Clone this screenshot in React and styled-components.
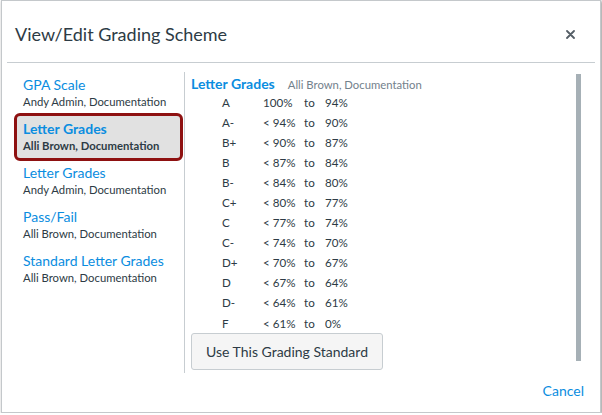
import styled, { createGlobalStyle } from "styled-components";

const GlobalStyle = createGlobalStyle`
  html, body {
    margin: 0;
    padding: 0;
    background: #ffffff;
  }
  body {
    font-family: Lato, "Noto Sans", sans-serif;
    color: #2d3b45;
  }
`;

const Dialog = styled.div`
  box-sizing: border-box;
  width: 600px;
  height: 413px;
  margin-left: 1px;
  background: #fff;
  border: 1px solid #c4c8cb;
  box-shadow: 1px 1px 3px rgba(0, 0, 0, 0.45);
  display: flex;
  flex-direction: column;
`;

const Header = styled.div`
  height: 61px;
  margin: 0 5px;
  padding: 0 20px 0 8px;
  display: flex;
  align-items: center;
  justify-content: space-between;
  border-bottom: 1px solid #c7cdd1;
`;

const Title = styled.h2`
  margin: 0;
  font-size: 18px;
  font-weight: 400;
  color: #2d3b45;
  padding-top: 4px;
`;

const CloseButton = styled.button`
  border: 0;
  background: none;
  padding: 0;
  display: flex;
  margin-top: 5px;
`;

const Body = styled.div`
  display: flex;
  padding: 9px 0 0 6px;
  height: 301px;
`;

const SchemeList = styled.div`
  width: 165px;
  padding: 0 3px 0 8px;
  border-right: 1px solid #c7cdd1;
  display: flex;
  flex-direction: column;
`;

const SchemeItem = styled.div`
  height: 44px;
  box-sizing: border-box;
  padding: 4px 7px 6px;
  border-radius: 6px;

  ${({ $selected }) =>
    $selected &&
    `
    height: 48px;
    margin: -3px -2px -1px;
    padding: 4px 6px 4px;
    border: 3px solid #8e1111;
    background: #e1e1e1;
  `}
`;

const SchemeName = styled.div`
  font-size: 14px;
  line-height: 18px;
  color: #0a8de0;
  font-weight: ${({ $selected }) => ($selected ? 700 : 400)};
`;

const SchemeAuthor = styled.div`
  font-size: 11.3px;
  line-height: 16px;
  color: #2d3b45;
  font-weight: ${({ $selected }) => ($selected ? 700 : 400)};
`;

const Detail = styled.div`
  flex: 1;
  display: flex;
  padding-right: 19px;
`;

const DetailContent = styled.div`
  flex: 1;
  padding: 3px 0 0 6px;
`;

const DetailHeader = styled.div`
  display: flex;
  align-items: baseline;
  gap: 13px;
  line-height: 18px;
`;

const DetailName = styled.span`
  font-size: 14px;
  font-weight: 700;
  color: #0a8de0;
`;

const DetailAuthor = styled.span`
  font-size: 11.3px;
  color: #73818c;
`;

const GradeTable = styled.div`
  padding-left: 31px;
  margin-top: -2px;
`;

const GradeRow = styled.div`
  display: grid;
  grid-template-columns: 41px 41px 21px auto;
  height: 20.1px;
  align-items: center;
  font-size: 11.6px;
  color: #2d3b45;
`;

const UseButton = styled.button`
  margin-top: 0;
  width: 192px;
  height: 37px;
  background: #f5f5f5;
  border: 1px solid #c7cdd1;
  border-radius: 3px;
  font-family: Lato, "Noto Sans", sans-serif;
  font-size: 14px;
  color: #2d3b45;
  padding: 0;
`;

const ScrollThumb = styled.div`
  width: 5px;
  height: 287px;
  margin-top: 2px;
  background: #a6b0b6;
`;

const Footer = styled.div`
  flex: 1;
  display: flex;
  align-items: center;
  justify-content: flex-end;
  padding: 0 16px 5px 0;
`;

const CancelLink = styled.a`
  font-size: 14px;
  color: #0a8de0;
  cursor: pointer;
`;

const schemes = [
  { name: "GPA Scale", author: "Andy Admin, Documentation" },
  { name: "Letter Grades", author: "Alli Brown, Documentation", selected: true },
  { name: "Letter Grades", author: "Andy Admin, Documentation" },
  { name: "Pass/Fail", author: "Alli Brown, Documentation" },
  { name: "Standard Letter Grades", author: "Alli Brown, Documentation" },
];

const grades = [
  ["A", "100%", "94%"],
  ["A-", "< 94%", "90%"],
  ["B+", "< 90%", "87%"],
  ["B", "< 87%", "84%"],
  ["B-", "< 84%", "80%"],
  ["C+", "< 80%", "77%"],
  ["C", "< 77%", "74%"],
  ["C-", "< 74%", "70%"],
  ["D+", "< 70%", "67%"],
  ["D", "< 67%", "64%"],
  ["D-", "< 64%", "61%"],
  ["F", "< 61%", "0%"],
];

function App() {
  return (
    <>
      <GlobalStyle />
      <Dialog>
        <Header>
          <Title>View/Edit Grading Scheme</Title>
          <CloseButton aria-label="Close">
            <svg width="9" height="9" viewBox="0 0 9 9">
              <path d="M1 1 L8 8 M8 1 L1 8" stroke="#555e66" strokeWidth="1.8" strokeLinecap="round" />
            </svg>
          </CloseButton>
        </Header>

        <Body>
          <SchemeList>
            {schemes.map((s, i) => (
              <SchemeItem key={i} $selected={s.selected}>
                <SchemeName $selected={s.selected}>{s.name}</SchemeName>
                <SchemeAuthor $selected={s.selected}>{s.author}</SchemeAuthor>
              </SchemeItem>
            ))}
          </SchemeList>

          <Detail>
            <DetailContent>
              <DetailHeader>
                <DetailName>Letter Grades</DetailName>
                <DetailAuthor>Alli Brown, Documentation</DetailAuthor>
              </DetailHeader>
              <GradeTable>
                {grades.map(([letter, from, to]) => (
                  <GradeRow key={letter}>
                    <span>{letter}</span>
                    <span>{from}</span>
                    <span>to</span>
                    <span>{to}</span>
                  </GradeRow>
                ))}
              </GradeTable>
              <UseButton>Use This Grading Standard</UseButton>
            </DetailContent>
            <ScrollThumb />
          </Detail>
        </Body>

        <Footer>
          <CancelLink>Cancel</CancelLink>
        </Footer>
      </Dialog>
    </>
  );
}

export default App;
